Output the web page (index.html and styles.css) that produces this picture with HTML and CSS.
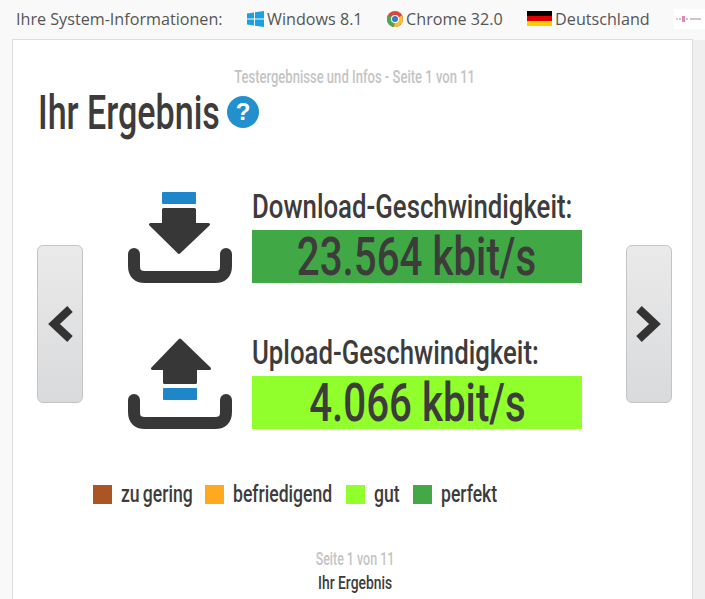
FILE: index.html
```html
<!DOCTYPE html>
<html>
    <head>
        <title>Ihr Ergebnis</title>
        <link rel="stylesheet" href="styles.css">
    </head>
    <body>
        <div class="sysinfo">
            <span class="sysLabel">Ihre System-Informationen:</span>
            <span class="sysItem">
                <svg class="sysIcon" width="17" height="16" viewBox="0 0 17 16">
                    <path fill="#1ba1e2" d="M0 2.500 7 1.400V7.500H0zM8 1.300 17 0V7.500H8zM0 8.500H7V14.600L0 13.500zM8 8.500H17V16L8 14.700z" />
                </svg>
                Windows 8.1
            </span>
            <span class="sysItem">
                <svg class="sysIcon" width="16" height="16" viewBox="0 0 16 16">
                    <circle cx="8" cy="8" r="8" fill="#d8473a" />
                    <path fill="#f4c430" d="M8 8 15 4.500A8 8 0 0 1 7 16z" />
                    <path fill="#4ba84f" d="M8 8 7 16A8 8 0 0 1 1 4z" />
                    <circle cx="8" cy="8" r="4" fill="#fff" />
                    <circle cx="8" cy="8" r="3" fill="#3b78c4" />
                </svg>
                Chrome 32.0
            </span>
            <span class="sysItem">
                <span class="flag"><i class="flagBlack"></i><i class="flagRed"></i><i class="flagGold"></i></span>
                Deutschland
            </span>
            <span class="providerLogo">
                <svg width="26" height="8" viewBox="0 0 26 8">
                    <rect x="0" y="3" width="2" height="2" fill="#f2c4de" />
                    <rect x="3" y="3" width="2" height="2" fill="#eeb4d4" />
                    <rect x="6" y="1" width="3" height="6" fill="#d98cb8" />
                    <rect x="10" y="3" width="2" height="2" fill="#eeb4d4" />
                    <rect x="14" y="3" width="11" height="2" fill="#cfc6ca" />
                </svg>
            </span>
        </div>

        <div class="main">
            <div class="card">
                <div class="pageHint"><span>Testergebnisse und Infos - Seite 1 von 11</span></div>
                <div class="titleRow">
                    <h1>Ihr Ergebnis</h1>
                    <span class="helpIcon">?</span>
                </div>

                <div class="result resultDown">
                    <svg class="speedIcon" width="104" height="92" viewBox="0 0 104 92">
                        <rect x="34" y="0" width="34" height="12" rx="1" fill="#1f87c9" />
                        <path fill="#373737" stroke="#373737" stroke-width="3" stroke-linejoin="round" d="M35.500 17.500H66.500V32.500H80.500L51 60.500 22.500 32.500H35.500z" />
                        <path fill="none" stroke="#373737" stroke-width="12" stroke-linecap="round" d="M6 62V74Q6 85 17 85H87Q98 85 98 74V62" />
                    </svg>
                    <div class="resultText">
                        <div class="speedLabel"><span>Download-Geschwindigkeit:</span></div>
                        <div class="speedBar speedPerfect"><span>23.564 kbit/s</span></div>
                    </div>
                </div>

                <div class="result resultUp">
                    <svg class="speedIcon" width="104" height="92" viewBox="0 0 104 92">
                        <path fill="#373737" stroke="#373737" stroke-width="3" stroke-linejoin="round" d="M36.500 44.500H67.500V30.500H81.500L52 2 24.500 30.500H36.500z" />
                        <rect x="35" y="50" width="34" height="12" rx="1" fill="#1f87c9" />
                        <path fill="none" stroke="#373737" stroke-width="12" stroke-linecap="round" d="M6 62V74Q6 85 17 85H87Q98 85 98 74V62" />
                    </svg>
                    <div class="resultText">
                        <div class="speedLabel"><span>Upload-Geschwindigkeit:</span></div>
                        <div class="speedBar speedGood"><span>4.066 kbit/s</span></div>
                    </div>
                </div>

                <div class="legend">
                    <span class="legendItem"><i class="swatch swatchLow"></i><span>zu gering</span></span>
                    <span class="legendItem"><i class="swatch swatchOk"></i><span>befriedigend</span></span>
                    <span class="legendItem"><i class="swatch swatchGood"></i><span>gut</span></span>
                    <span class="legendItem"><i class="swatch swatchPerfect"></i><span>perfekt</span></span>
                </div>

                <div class="pager">
                    <div class="pagerNum"><span>Seite 1 von 11</span></div>
                    <div class="pagerName"><span>Ihr Ergebnis</span></div>
                </div>

                <div class="navBtn navPrev">
                    <svg width="26" height="36" viewBox="0 0 26 36"><path fill="none" stroke="#333" stroke-width="8" d="M23 3 7 18 23 33" /></svg>
                </div>
                <div class="navBtn navNext">
                    <svg width="26" height="36" viewBox="0 0 26 36"><path fill="none" stroke="#333" stroke-width="8" d="M3 3 19 18 3 33" /></svg>
                </div>
            </div>
            <div class="sideStrip"></div>
        </div>
    </body>
</html>
```

FILE: styles.css
```css
html, body {
    height: 599px;
    overflow: hidden;
}

body {
    margin: 0;
    background: #f9f9f9;
    font-family: "Open Sans", sans-serif;
    color: #555;
}

.sysinfo {
    display: flex;
    align-items: center;
    height: 39px;
    padding-left: 16px;
    padding-bottom: 2px;
    box-sizing: border-box;
    font-size: 16.15px;
    white-space: nowrap;
}

.sysLabel {
    margin-right: 24px;
}

.sysItem {
    display: flex;
    align-items: center;
    gap: 3.5px;
    margin-right: 24px;
}

.sysIcon {
    flex: none;
}

.flag {
    display: flex;
    flex-direction: column;
    width: 25px;
    height: 16px;
}

.flag i {
    flex: 1;
}

.flagBlack { background: #000; }
.flagRed { background: #dd0000; }
.flagGold { background: #ffce00; }

.providerLogo {
    display: flex;
    align-items: center;
    justify-content: center;
    width: 32px;
    height: 20px;
    background: #fff;
}

.main {
    display: flex;
    height: 560px;
}

.sideStrip {
    flex: 1;
    margin-top: 1px;
    background: #efefef;
}

.card {
    position: relative;
    flex: none;
    box-sizing: border-box;
    width: 681px;
    margin-left: 12px;
    padding: 24px 25px 0;
    background: #fff;
    border: 1px solid #ddd;
    border-bottom: 0;
    font-family: Roboto, "Liberation Sans", sans-serif;
    color: #3e3b3b;
    white-space: nowrap;
}

/* no condensed slab here, so the roboto text gets squeezed sideways */
.pageHint span,
.pagerNum span,
.pagerName span,
.speedLabel span,
.speedBar span,
.legendItem span {
    display: inline-block;
}

.pageHint {
    padding-left: 4px;
    text-align: center;
    font-size: 19px;
    font-weight: 500;
    line-height: 26px;
    color: #c4c4c4;
}

.pageHint span {
    transform: scaleX(0.686);
}

.titleRow {
    display: flex;
    align-items: center;
    gap: 8px;
    height: 50px;
    margin-top: -3px;
}

h1 {
    width: 181px;
    margin: 0;
    font-size: 49px;
    font-weight: 500;
    transform: scaleX(0.695);
    transform-origin: left center;
}

.helpIcon {
    width: 32px;
    height: 32px;
    border-radius: 50%;
    background: #2290cf;
    color: #fff;
    font-family: "Liberation Sans", sans-serif;
    font-size: 24px;
    font-weight: bold;
    line-height: 32px;
    text-align: center;
}

.result {
    display: flex;
    align-items: flex-start;
    gap: 20px;
    padding-left: 90px;
}

.resultDown {
    margin-top: 55px;
}

.resultUp {
    margin-top: 54px;
}

.speedIcon {
    flex: none;
}

.resultText {
    width: 330px;
}

.speedLabel {
    height: 38px;
    font-size: 34px;
    font-weight: 500;
    line-height: 29px;
}

.speedLabel span {
    transform: scaleX(0.758);
    transform-origin: left center;
}

.speedBar {
    height: 53px;
    text-align: center;
    font-size: 53px;
    font-weight: 500;
    line-height: 55px;
}

.speedBar span {
    transform: scaleX(0.76);
}

.speedPerfect { background: #40a845; }
.speedGood { background: #90ff2c; }

.legend {
    display: grid;
    grid-template-columns: 112px 141px 67px auto;
    margin-top: 52px;
    padding-left: 55px;
}

.legendItem {
    display: flex;
    align-items: center;
    gap: 9px;
    font-size: 23px;
    font-weight: 500;
    line-height: 22px;
}

.legendItem span {
    padding-top: 2px;
    word-spacing: -1.5px;
    transform: scaleX(0.765);
    transform-origin: left center;
}

.swatch {
    flex: none;
    width: 19px;
    height: 19px;
}

.swatchLow { background: #ab5525; }
.swatchOk { background: #ffa820; }
.swatchGood { background: #90ff2c; }
.swatchPerfect { background: #43a845; }

.pager {
    margin-top: 41px;
    padding-left: 5px;
    text-align: center;
}

.pagerNum {
    font-size: 18px;
    font-weight: 500;
    line-height: 24px;
    color: #c4c4c4;
}

.pagerName {
    font-size: 18px;
    font-weight: 500;
    line-height: 23px;
}

.pagerNum span {
    transform: scaleX(0.69);
}

.pagerName span {
    transform: scaleX(0.77);
}

.navBtn {
    position: absolute;
    top: 205px;
    display: flex;
    align-items: center;
    justify-content: center;
    box-sizing: border-box;
    width: 46px;
    height: 158px;
    border: 1px solid #c4c4c4;
    border-radius: 6px;
    background: linear-gradient(#eaeaeb, #d9dadb);
}

.navPrev { left: 24px; }
.navNext { left: 613px; }
```
